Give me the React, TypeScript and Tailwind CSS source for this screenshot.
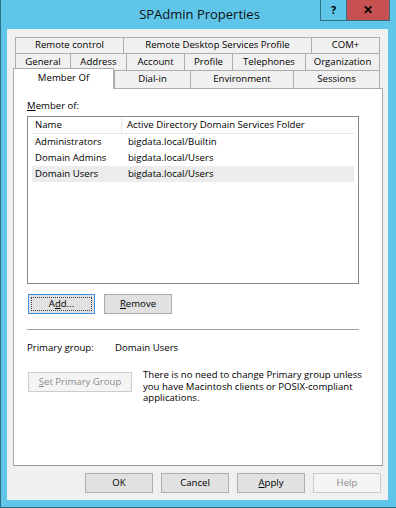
import React from "react";

const font = "font-['Open_Sans',sans-serif]";

const row1 = [
  { label: "Remote control", w: "w-[108px]" },
  { label: "Remote Desktop Services Profile", w: "w-[188px]" },
  { label: "COM+", w: "w-[69px]" },
];

const row2 = [
  { label: "General", w: "w-[55px]" },
  { label: "Address", w: "w-[56px]" },
  { label: "Account", w: "w-[58px]" },
  { label: "Profile", w: "w-[48px]" },
  { label: "Telephones", w: "w-[73px]" },
  { label: "Organization", w: "w-[75px]" },
];

const row3 = [
  { label: "Dial-in", w: "w-[76px]" },
  { label: "Environment", w: "w-[103px]" },
  { label: "Sessions", w: "w-[87px]" },
];

const groups = [
  { name: "Administrators", folder: "bigdata.local/Builtin" },
  { name: "Domain Admins", folder: "bigdata.local/Users" },
  { name: "Domain Users", folder: "bigdata.local/Users", selected: true },
];

function Tab({ label, w, last }: { label: string; w: string; last?: boolean }) {
  return (
    <div
      className={`${w} h-full flex items-center justify-center border-t border-l border-[#acacac] bg-[#f0f0f0] text-[9.6px] text-black ${
        last ? "border-r" : ""
      }`}
    >
      {label}
    </div>
  );
}

function Button({
  children,
  w = "w-[68px]",
  disabled,
  focused,
}: {
  children: React.ReactNode;
  w?: string;
  disabled?: boolean;
  focused?: boolean;
}) {
  const look = disabled
    ? "border-[#cccccc] bg-[#f4f4f4] text-[#8c8c8c]"
    : focused
    ? "border-[#3c8fd8] bg-[#e1e1e1] text-black"
    : "border-[#adadad] bg-[#e1e1e1] text-black";
  return (
    <div className={`${w} h-[20px] border ${look} flex items-center justify-center p-[2px] text-[9.6px]`}>
      <div
        className={`w-full h-full flex items-center justify-center ${
          focused ? "border border-dotted border-[#444]" : ""
        }`}
      >
        {children}
      </div>
    </div>
  );
}

export default function App() {
  return (
    <div className={`${font} w-[396px] h-[508px] bg-[#5fc6ea] border-l border-b border-[#2f6f86] flex flex-col`}>
      {/* title bar */}
      <div className="relative h-[29px] flex items-center justify-center">
        <span className="text-[13px] text-[#111] pl-[2px] pt-[1px]">SPAdmin Properties</span>
        <div className="absolute top-0 right-[6px] flex">
          <div className="w-[27px] h-[21px] border border-t-0 border-[#2f6f86] bg-[#5fc6ea] flex items-center justify-center text-[11px] font-bold text-black">
            ?
          </div>
          <div className="w-[43px] h-[21px] border border-t-0 border-l-0 border-[#2f6f86] bg-[#c75050] flex items-center justify-center text-[12px] font-bold text-black">
            ✕
          </div>
        </div>
      </div>

      {/* client area */}
      <div className="ml-[6px] w-[381px] h-[471px] bg-[#f0f0f0] flex flex-col px-[6px] pt-[8px]">
        {/* tabs */}
        <div className="flex h-[16px] pl-[2px]">
          {row1.map((t, i) => (
            <Tab key={t.label} label={t.label} w={t.w} last={i === row1.length - 1} />
          ))}
        </div>
        <div className="flex h-[17px] pl-[2px]">
          {row2.map((t, i) => (
            <Tab key={t.label} label={t.label} w={t.w} last={i === row2.length - 1} />
          ))}
        </div>
        <div className="flex h-[18px]">
          <div className="relative z-10 w-[101px] -mt-[2px] -mb-px flex items-start justify-center pt-[2px] border-t border-l border-r border-[#acacac] bg-white text-[9.6px]">
            Member Of
          </div>
          {row3.map((t, i) => (
            <Tab key={t.label} label={t.label} w={t.w} last={i === row3.length - 1} />
          ))}
        </div>

        {/* panel */}
        <div className="w-[370px] h-[378px] bg-white border border-[#acacac] border-b-[#9a9a9a] flex flex-col pl-[13px] pt-[10px] text-[9.6px] text-black">
          <div className="h-[14px] leading-[14px]">
            <span className="underline">M</span>ember of:
          </div>
          <div className="mt-[3px] w-[332px] h-[168px] border border-[#828790] bg-white px-[4px] pt-px flex flex-col">
            <div className="flex h-[16px] items-center border-b border-[#e5e5e5]">
              <div className="w-[90px] h-full flex items-center pl-[3px] border-r border-[#e5e5e5]">Name</div>
              <div className="pl-[5px]">Active Directory Domain Services Folder</div>
            </div>
            {groups.map((g) => (
              <div
                key={g.name}
                className={`flex h-[16px] items-center ${g.selected ? "bg-[#ececec]" : ""}`}
              >
                <div className="w-[90px] pl-[3px]">{g.name}</div>
                <div className="pl-[6px]">{g.folder}</div>
              </div>
            ))}
          </div>

          <div className="mt-[10px] ml-px flex gap-[9px]">
            <Button w="w-[67px]" focused>
              A<span className="underline">d</span>d...
            </Button>
            <Button w="w-[68px]">
              <span className="underline">R</span>emove
            </Button>
          </div>

          <div className="mt-[15px] w-[332px] h-px bg-[#a0a0a0]" />

          <div className="mt-[11px] h-[14px] leading-[14px] flex">
            <div className="w-[88px]">Primary group:</div>
            <div>Domain Users</div>
          </div>

          <div className="mt-[14px] ml-px flex items-start gap-[11px]">
            <div className="mt-[3px]">
              <Button w="w-[104px]" disabled>
                <span className="underline">S</span>et Primary Group
              </Button>
            </div>
            <div className="leading-[11.5px] whitespace-nowrap">
              There is no need to change Primary group unless
              <br />
              you have Macintosh clients or POSIX-compliant
              <br />
              applications.
            </div>
          </div>
        </div>

        {/* dialog buttons */}
        <div className="mt-[7px] flex justify-end gap-[8px] pr-px">
          <Button>OK</Button>
          <Button>Cancel</Button>
          <Button>
            <span className="underline">A</span>pply
          </Button>
          <Button disabled>Help</Button>
        </div>
      </div>
    </div>
  );
}
